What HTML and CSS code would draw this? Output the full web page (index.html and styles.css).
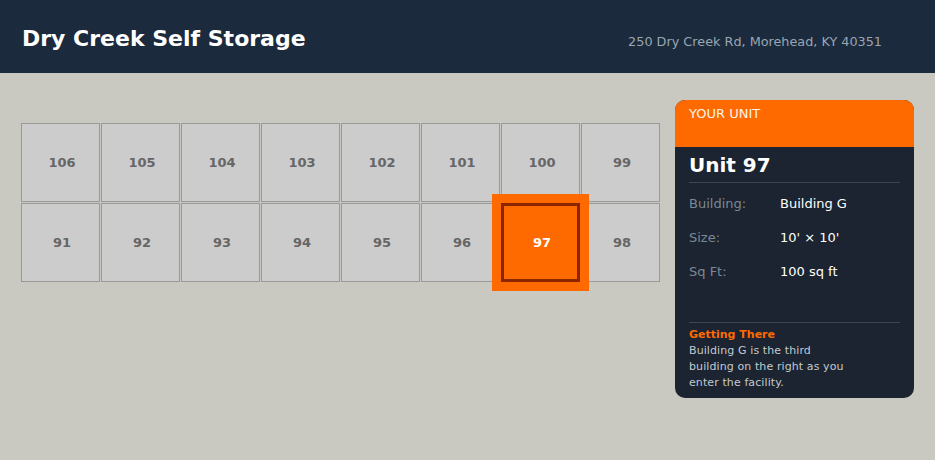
FILE: index.html
```html
<!DOCTYPE html>
<html>
<head>
<meta charset="utf-8">
<link rel="stylesheet" href="styles.css">
</head>
<body>
<header class="topbar">
  <h1 class="title">Dry Creek Self Storage</h1>
  <div class="address">250 Dry Creek Rd, Morehead, KY 40351</div>
</header>
<main class="main">
  <section class="grid">
    <div class="cell">106</div>
    <div class="cell">105</div>
    <div class="cell">104</div>
    <div class="cell">103</div>
    <div class="cell">102</div>
    <div class="cell">101</div>
    <div class="cell">100</div>
    <div class="cell">99</div>
    <div class="cell">91</div>
    <div class="cell">92</div>
    <div class="cell">93</div>
    <div class="cell">94</div>
    <div class="cell">95</div>
    <div class="cell">96</div>
    <div class="cell cell-active">97</div>
    <div class="cell">98</div>
  </section>
  <aside class="panel">
    <div class="panel-head">YOUR UNIT</div>
    <div class="panel-body">
      <h2 class="unit">Unit 97</h2>
      <div class="rows">
        <div class="row"><span class="label">Building:</span><span class="value">Building G</span></div>
        <div class="row"><span class="label">Size:</span><span class="value">10' × 10'</span></div>
        <div class="row"><span class="label">Sq Ft:</span><span class="value">100 sq ft</span></div>
      </div>
      <div class="directions">
        <div class="dir-title">Getting There</div>
        <p class="dir-text">Building G is the third<br>building on the right as you<br>enter the facility.</p>
      </div>
    </div>
  </aside>
</main>
</body>
</html>
```

FILE: styles.css
```css
* { box-sizing: border-box; }
html, body { margin: 0; padding: 0; }
body {
  background: #c9c9c1;
  font-family: "DejaVu Sans", sans-serif;
  width: 935px;
  height: 460px;
  overflow: hidden;
}
.topbar {
  height: 73px;
  background: #1b2a3c;
  display: flex;
  align-items: center;
  justify-content: space-between;
  padding: 0 53px 0 22px;
}
.title {
  margin: 0;
  color: #ffffff;
  font-size: 22px;
  font-weight: bold;
  position: relative;
  top: 2px;
}
.address {
  color: #9aa6b2;
  font-size: 12.8px;
  position: relative;
  top: 5px;
}
.main {
  display: flex;
  align-items: flex-start;
  padding: 27px 21px 0 21px;
  justify-content: space-between;
}
.grid {
  margin-top: 23px;
  display: grid;
  grid-template-columns: repeat(8, 79px);
  grid-auto-rows: 79px;
  gap: 1px;
}
.cell {
  background: #cccccc;
  border: 1px solid #999999;
  display: flex;
  align-items: center;
  justify-content: center;
  padding-left: 3px;
  color: #666666;
  font-weight: bold;
  font-size: 13px;
}
.cell-active {
  background: #ff6a00;
  border: 3px solid #8b2500;
  color: #ffffff;
  box-shadow: 0 0 0 9px #ff6a00;
  position: relative;
  z-index: 1;
}
.panel {
  width: 239px;
  height: 298px;
  border-radius: 10px;
  overflow: hidden;
  background: #1b2430;
  display: flex;
  flex-direction: column;
}
.panel-head {
  background: #ff6a00;
  height: 47px;
  color: #fff3e8;
  font-size: 13px;
  padding: 6px 14px 0;
}
.panel-body {
  padding: 6px 14px 0;
  flex: 1;
  display: flex;
  flex-direction: column;
}
.unit {
  margin: 0;
  color: #ffffff;
  font-size: 20px;
  font-weight: bold;
  line-height: 24px;
  padding-bottom: 5px;
  border-bottom: 1px solid #384656;
}
.rows {
  padding-top: 3px;
  height: 140px;
  border-bottom: 1px solid #384656;
}
.row {
  display: flex;
  height: 34px;
  align-items: center;
  font-size: 13px;
}
.label { width: 91px; color: #7c8896; }
.value { color: #ffffff; }
.directions { padding-top: 5px; }
.dir-title {
  color: #ff6a00;
  font-weight: bold;
  font-size: 11px;
  line-height: 14px;
}
.dir-text {
  margin: 1px 0 0;
  color: #c3c9d0;
  font-size: 11px;
  letter-spacing: 0.1px;
  line-height: 16px;
}
```
